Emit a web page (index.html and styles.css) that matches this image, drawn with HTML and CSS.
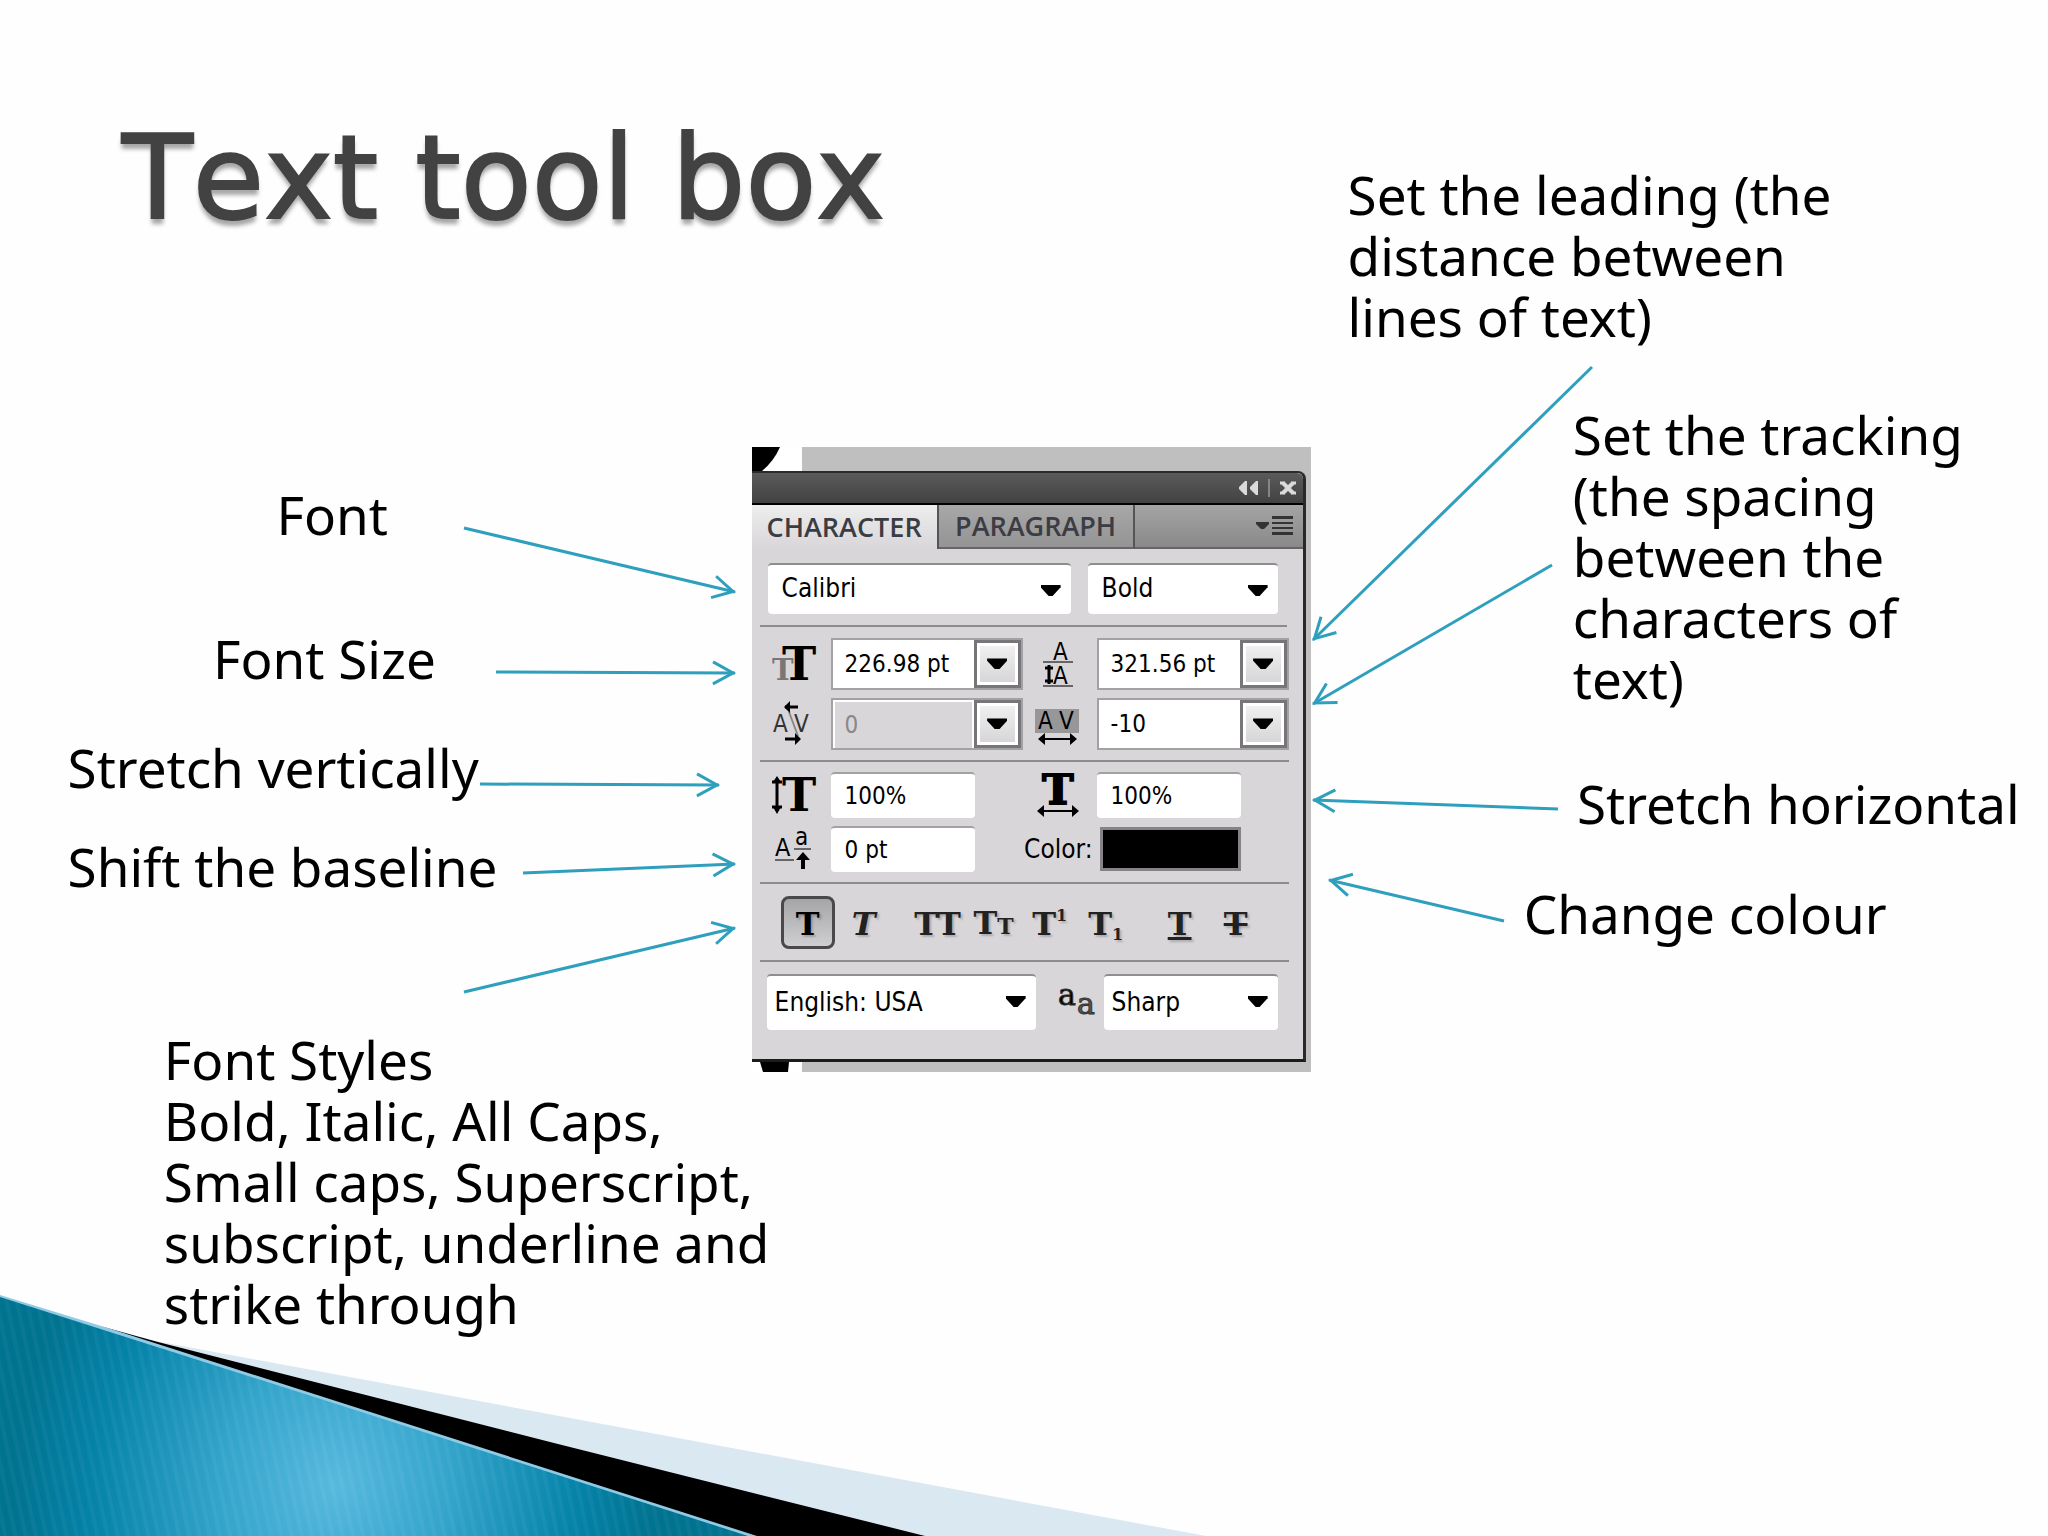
FILE: index.html
```html
<!DOCTYPE html>
<html lang="en">
<head>
    <meta charset="UTF-8">
    <meta name="viewport" content="width=device-width, initial-scale=1.0">
    <title>Text tool box</title>
    <link rel="stylesheet" href="styles.css">
</head>
<body>

<main class="slide">
    <!-- background wave -->
    <svg class="wave" viewBox="0 0 2048 256" preserveAspectRatio="none" aria-hidden="true">
        <defs>
            <radialGradient id="teal" gradientUnits="userSpaceOnUse" cx="0" cy="0" r="1" gradientTransform="translate(335 205) rotate(-78) scale(360 320)">
                <stop offset="0" stop-color="#58b9de"/>
                <stop offset="0.35" stop-color="#35a5cb"/>
                <stop offset="0.75" stop-color="#0583a9"/>
                <stop offset="1" stop-color="#007390"/>
            </radialGradient>
            <pattern id="stripes" width="10" height="10" patternUnits="userSpaceOnUse" patternTransform="rotate(-12)">
                <rect width="4" height="10" fill="#ffffff" opacity="0.04"/>
            </pattern>
        </defs>
        <polygon points="150,60 1206,256 900,256" fill="#d9e8f1"/>
        <polygon points="100,46 158,62 554,163 925,256 740,256" fill="#000000"/>
        <polygon points="0,16 111,50 751,256 0,256" fill="url(#teal)"/>
        <polygon points="0,16 111,50 751,256 0,256" fill="url(#stripes)"/>
        <polygon points="0,15 111,49 757,256 748,256 352,129 0,17" fill="#8fcbe4"/>
    </svg>

    <h1>Text tool box</h1>

    <!-- callouts -->
    <p class="callout font">Font</p>
    <p class="callout size">Font Size</p>
    <p class="callout vertical">Stretch vertically</p>
    <p class="callout baseline">Shift the baseline</p>
    <p class="callout styles">Font Styles<br>Bold, Italic, All Caps,<br>Small caps, Superscript,<br>subscript, underline and<br>strike through</p>
    <p class="callout leading">Set the leading (the<br>distance between<br>lines of text)</p>
    <p class="callout tracking">Set the tracking<br>(the spacing<br>between the<br>characters of<br>text)</p>
    <p class="callout horizontal">Stretch horizontal</p>
    <p class="callout colour">Change colour</p>

    <!-- character panel -->
    <section class="capture">
        <svg class="scrap" width="50" height="24" viewBox="0 0 50 24" aria-hidden="true">
            <rect width="50" height="24" fill="#fff"/>
            <path d="M0 0H28Q22 14 10 24H0Z"/>
        </svg>
        <div class="panel">
            <div class="titlebar">
                <button type="button" aria-label="Collapse">
                    <svg width="20" height="14" viewBox="0 0 20 14" fill="#dadada"><path d="M8 0V14H6L0 8V6L6 0ZM19 0V14H17L11 8V6L17 0Z"/></svg>
                </button>
                <span class="divider"></span>
                <button type="button" aria-label="Close">
                    <svg width="18" height="14" viewBox="0 0 18 14" fill="none" stroke="#dadada" stroke-width="4"><path d="M4 2L14 12M14 2L4 12"/><path d="M1 2H6M12 2H17M1 12H6M12 12H17" stroke-width="3"/></svg>
                </button>
            </div>
            <div class="tabs">
                <button type="button" class="tab active">CHARACTER</button>
                <button type="button" class="tab">PARAGRAPH</button>
                <button type="button" class="menu" aria-label="Panel menu">
                    <svg width="38" height="20" viewBox="0 0 38 20" fill="#333"><path d="M0 6H13V8L8 13H5L0 8ZM16 0H37V3H16ZM16 6H37V8H16ZM16 11H37V13H16ZM16 16H37V19H16Z"/></svg>
                </button>
            </div>

            <div class="row fonts">
                <div class="select family"><select aria-label="Font family"><option>Calibri</option></select></div>
                <div class="select style"><select aria-label="Font style"><option>Bold</option></select></div>
            </div>

            <div class="row fields">
                <label for="fontSize" aria-label="Font size">
                    <svg width="48" height="44" viewBox="0 0 48 44">
                        <text x="0" y="38" class="serif" font-size="29" fill="#777">T</text>
                        <text x="10" y="38" class="serif" font-size="46">T</text>
                    </svg>
                </label>
                <div class="combo"><input id="fontSize" type="text" value="226.98 pt"><button type="button" aria-label="Size list"></button></div>
                <label for="leading" aria-label="Leading">
                    <svg width="48" height="48" viewBox="0 0 48 48">
                        <text x="18" y="20" class="sans" font-size="24">A</text>
                        <text x="18" y="44" class="sans" font-size="24">A</text>
                        <path d="M8 22H38M8 46H38" stroke="#666" stroke-width="2"/>
                        <path d="M14 25V44M10 28H18M10 41H18" stroke="#000" stroke-width="3"/>
                    </svg>
                </label>
                <div class="combo"><input id="leading" type="text" value="321.56 pt"><button type="button" aria-label="Leading list"></button></div>

                <label for="kerning" aria-label="Kerning">
                    <svg width="48" height="48" viewBox="0 0 48 48">
                        <text x="1" y="32" class="sans" font-size="24" fill="#333">A</text>
                        <text x="22" y="32" class="sans" font-size="24" fill="#333">V</text>
                        <path d="M17 12L26 36" stroke="#888" stroke-width="2"/>
                        <path d="M13 7H26M13 39H26" stroke="#000" stroke-width="3"/>
                        <path d="M12 7L18 1V13ZM29 39L23 33V45Z"/>
                    </svg>
                </label>
                <div class="combo disabled"><input id="kerning" type="text" value="0" disabled><button type="button" aria-label="Kerning list"></button></div>
                <label for="tracking" aria-label="Tracking">
                    <svg width="48" height="48" viewBox="0 0 48 48">
                        <rect x="0" y="9" width="44" height="24" fill="#979797"/>
                        <text x="3" y="29" class="sans" font-size="24">A</text>
                        <text x="24" y="29" class="sans" font-size="24">V</text>
                        <path d="M6 39H39" stroke="#000" stroke-width="2"/>
                        <path d="M3 39L10 33V45ZM42 39L35 33V45Z"/>
                    </svg>
                </label>
                <div class="combo"><input id="tracking" type="text" value="-10"><button type="button" aria-label="Tracking list"></button></div>
            </div>

            <div class="row fields scale">
                <label for="vScale" aria-label="Vertical scale">
                    <svg width="48" height="44" viewBox="0 0 48 44">
                        <text x="10" y="38" class="serif" font-size="46">T</text>
                        <path d="M5 6V38M0 9H10M0 34H10" stroke="#000" stroke-width="3"/>
                        <path d="M5 3L9 9H1ZM5 41L9 34H1Z"/>
                    </svg>
                </label>
                <input id="vScale" type="text" value="100%">
                <label for="hScale" aria-label="Horizontal scale">
                    <svg width="48" height="44" viewBox="0 0 48 44">
                        <text x="23" y="31" class="serif wide" font-size="42" text-anchor="middle">T</text>
                        <path d="M4 38H41" stroke="#000" stroke-width="2"/>
                        <path d="M2 38L9 32V44ZM44 38L37 32V44Z"/>
                    </svg>
                </label>
                <input id="hScale" type="text" value="100%">

                <label for="shift" aria-label="Baseline shift">
                    <svg width="48" height="44" viewBox="0 0 48 44">
                        <text x="3" y="29" class="sans" font-size="25">A</text>
                        <text x="23" y="18" class="sans" font-size="24">a</text>
                        <path d="M3 33H22M22 22H39" stroke="#666" stroke-width="2"/>
                        <path d="M31 28V42" stroke="#000" stroke-width="4"/>
                        <path d="M31 25L38 33H24Z"/>
                    </svg>
                </label>
                <input id="shift" type="text" value="0 pt">
                <label class="text" for="color">Color:</label>
                <input id="color" type="color" value="#000000">
            </div>

            <div class="row buttons">
                <div class="group">
                    <button type="button" class="pressed" aria-label="Bold">T</button>
                    <button type="button" aria-label="Italic"><i>T</i></button>
                </div>
                <div class="group">
                    <button type="button" aria-label="All caps">TT</button>
                    <button type="button" aria-label="Small caps">T<small>T</small></button>
                    <button type="button" aria-label="Superscript">T<sup>1</sup></button>
                    <button type="button" aria-label="Subscript">T<sub>1</sub></button>
                </div>
                <div class="group">
                    <button type="button" aria-label="Underline"><u>T</u></button>
                    <button type="button" aria-label="Strikethrough"><s>T</s></button>
                </div>
            </div>

            <div class="row language">
                <div class="select lang"><select aria-label="Language"><option>English: USA</option></select></div>
                <label for="antialias" aria-label="Anti-aliasing">
                    <svg width="38" height="36" viewBox="0 0 38 36">
                        <text x="0" y="21" class="aa" font-size="30">a</text>
                        <text x="19" y="30" class="aa" font-size="30" fill="#555">a</text>
                    </svg>
                </label>
                <div class="select sharp"><select id="antialias"><option>Sharp</option></select></div>
            </div>
        </div>
        <svg class="scrap" width="50" height="10" viewBox="0 0 50 10" aria-hidden="true">
            <rect width="50" height="10" fill="#fff"/>
            <path d="M8 0H37L36 10H11Z"/>
        </svg>
    </section>

    <!-- arrows from the callouts to the panel -->
    <svg class="arrows" viewBox="0 0 2048 1536" preserveAspectRatio="none" aria-hidden="true">
        <defs>
            <marker id="head" markerUnits="userSpaceOnUse" markerWidth="28" markerHeight="28" refX="26" refY="14" orient="auto">
                <path class="tip" d="M4 3L24 14L4 25"/>
            </marker>
        </defs>
        <path class="arrow" d="M464 528L735 592"/>
        <path class="arrow" d="M496 672L735 673"/>
        <path class="arrow" d="M480 784L719 785"/>
        <path class="arrow" d="M523 873L735 864"/>
        <path class="arrow" d="M464 992L735 928"/>
        <path class="arrow" d="M1592 367L1313 640"/>
        <path class="arrow" d="M1552 565L1313 704"/>
        <path class="arrow" d="M1558 809L1313 800"/>
        <path class="arrow" d="M1504 921L1329 880"/>
    </svg>
</main>

</body>
</html>
```
FILE: styles.css
```css
* {
    box-sizing: border-box;
}
body {
    margin: 0;
    background-color: #fefefe;
    color: #000;
    font-family: "Noto Sans", "Open Sans", sans-serif;
}
.slide {
    position: relative;
    min-height: 100vh;
    overflow: hidden;
}
.wave {
    position: absolute;
    left: 0;
    bottom: 0;
    width: 100%;
    height: 256px;
}
h1 {
    margin: 0;
    padding: 92px 122px 0;
    font-family: "DejaVu Sans", sans-serif;
    font-size: 116px;
    line-height: 172px;
    font-weight: normal;
    font-kerning: none;
    color: #424242;
    -webkit-text-stroke: 2px #424242;
    text-shadow: 0 6px 4px rgba(0, 0, 0, 0.35);
}

/* callouts sit freely round the panel */
.callout {
    position: absolute;
    margin: 0;
    font-size: 53px;
    line-height: 61px;
    white-space: nowrap;
}
.font { left: 13.5%; top: 31.5%; }
.size { left: 10.4%; top: 40.9%; }
.vertical { left: 3.3%; top: 48%; }
.baseline { left: 3.3%; top: 54.4%; }
.styles { left: 8%; top: 67%; }
.leading { left: 65.8%; top: 10.7%; }
.tracking { left: 76.8%; top: 26.3%; }
.horizontal { left: 77%; top: 50.3%; }
.colour { left: 74.4%; top: 57.5%; }
.arrows {
    position: absolute;
    left: 0;
    top: 0;
    width: 100%;
    height: 100%;
    pointer-events: none;
}
.arrow, .tip {
    fill: none;
    stroke: #2e9fbd;
    stroke-width: 3;
}
.arrow {
    marker-end: url(#head);
}

/* panel */
.capture {
    position: absolute;
    left: 36.7%;
    top: 29.1%;
    width: 559px;
    background-color: #bfbfbf;
}
.scrap {
    display: block;
}
.panel {
    margin-right: 5px;
    border-top: 2px solid #2b2b2b;
    border-right: 3px solid #2b2829;
    border-bottom: 3px solid #1d1b1c;
    border-radius: 0 8px 0 0;
    background-color: #d8d6d9;
    font-family: "DejaVu Sans Condensed", "DejaVu Sans", sans-serif;
    font-size: 24px;
}
button, input, select {
    margin: 0;
    padding: 0;
    border: 0;
    border-radius: 0;
    background: none;
    color: #000;
    font: inherit;
}
.titlebar {
    display: flex;
    justify-content: flex-end;
    align-items: center;
    gap: 9px;
    height: 32px;
    padding-right: 6px;
    border-bottom: 2px solid #000;
    border-radius: 0 6px 0 0;
    background: linear-gradient(#5b5b5b, #424242);
}
.titlebar button {
    display: flex;
}
.divider {
    width: 2px;
    height: 18px;
    background-color: #858585;
}
.tabs {
    display: flex;
    height: 44px;
    background: linear-gradient(#a4a4a4, #888);
}
.tab {
    width: 196px;
    border-right: 2px solid #555;
    border-bottom: 2px solid #666;
    background: linear-gradient(#a8a8a8, #949494);
    color: #3c3c44;
    font-family: "Open Sans", "Noto Sans", sans-serif;
    font-size: 27px;
    font-weight: 600;
}
.tab.active {
    width: 187px;
    border-bottom: 0;
    background: linear-gradient(#eee, #d8d6d9);
}
.menu {
    display: flex;
    flex: 1;
    justify-content: flex-end;
    align-items: center;
    padding-right: 9px;
    border-bottom: 2px solid #666;
}
.row {
    margin: 0 16px 0 8px;
    border-bottom: 2px solid #8d8b8e;
}
.fonts {
    display: flex;
    gap: 17px;
    padding: 14px 9px 11px 8px;
}
.select {
    position: relative;
    height: 51px;
    border-top: 2px solid #8f8d90;
    border-radius: 4px;
    background-color: #fff;
    font-size: 26px;
}
.select select {
    appearance: none;
    width: 100%;
    height: 100%;
    padding: 0 0 2px 14px;
}
.select::after {
    content: "";
    position: absolute;
    right: 10px;
    top: 20px;
    width: 20px;
    height: 11px;
    background-color: #000;
    clip-path: polygon(0 0, 100% 0, 100% 20%, 60% 100%, 40% 100%, 0 20%);
    pointer-events: none;
}
.family {
    flex: 1;
}
.style {
    width: 190px;
}
.fields {
    display: grid;
    grid-template-columns: 71px minmax(0, 1fr) 74px minmax(0, 1fr);
    row-gap: 8px;
    align-items: center;
    margin-right: 14px;
    padding: 11px 0 10px;
}
.fields label {
    display: flex;
    padding-left: 12px;
}
.fields svg {
    display: block;
}
.serif {
    font-family: "DejaVu Serif", serif;
    font-weight: bold;
}
.wide {
    stroke: #000;
    stroke-width: 2;
}
.sans {
    font-family: "DejaVu Sans Condensed", "DejaVu Sans", sans-serif;
}
.aa {
    font-family: "DejaVu Serif", serif;
    stroke: #333;
    stroke-width: 1;
}
.combo {
    display: flex;
    height: 52px;
    border: 2px solid #a3a1a4;
    background-color: #fff;
}
.combo input {
    flex: 1;
    min-width: 0;
    padding-left: 12px;
}
.combo.disabled input {
    margin: 2px 2px 0;
    padding-left: 10px;
    background-color: #d8d6d9;
    color: #888;
}
.combo button {
    display: flex;
    justify-content: center;
    align-items: center;
    width: 47px;
    border: 3px solid #77757a;
    background: linear-gradient(#f2f2f2, #d4d4d6);
    box-shadow: inset 0 0 0 3px #fff;
}
.combo button::after {
    content: "";
    width: 20px;
    height: 11px;
    background-color: #000;
    clip-path: polygon(0 0, 100% 0, 100% 20%, 60% 100%, 40% 100%, 0 20%);
}
.scale {
    padding: 10px 0;
}
.scale input {
    width: 144px;
    height: 46px;
    padding-left: 14px;
    border-top: 2px solid #a3a1a4;
    border-radius: 4px;
    background-color: #fff;
}
.scale .text {
    justify-content: flex-end;
    padding: 0 4px 0 0;
    margin-left: -20px;
    font-size: 26px;
}
.scale input[type="color"] {
    appearance: none;
    width: 141px;
    height: 44px;
    margin-left: 3px;
    padding: 0;
    border: 3px solid #858387;
    border-radius: 0;
    background-color: #000;
}
input[type="color"]::-webkit-color-swatch-wrapper {
    padding: 0;
}
input[type="color"]::-webkit-color-swatch {
    border: 0;
}
.buttons {
    display: flex;
    gap: 20px;
    padding: 12px 0 11px 21px;
    margin-right: 14px;
}
.group {
    display: flex;
    gap: 2px;
}
.group button {
    width: 54px;
    height: 53px;
    padding-top: 4px;
    border-radius: 8px;
    color: #222;
    font-family: "DejaVu Serif", serif;
    font-size: 32px;
    font-weight: bold;
    line-height: 32px;
    text-shadow: 2px 2px 2px rgba(0, 0, 0, 0.2);
    white-space: nowrap;
}
.group .pressed {
    border: 3px solid #4a484b;
    background: linear-gradient(#a5a4a7, #cfced1);
    color: #000;
}
.group small {
    font-size: 22px;
}
.group sup, .group sub {
    font-size: 16px;
    line-height: 0;
}
.group sup {
    vertical-align: 14px;
}
.group sub {
    vertical-align: -5px;
}
.group u {
    text-decoration-thickness: 3px;
}
.language {
    display: flex;
    align-items: center;
    padding: 12px 9px 29px 7px;
    border-bottom: 0;
}
.language .select {
    height: 56px;
}
.language select {
    padding-left: 8px;
}
.lang {
    flex: 1;
}
.language label {
    margin: 0 8px 0 22px;
}
.language svg {
    display: block;
}
.sharp {
    width: 174px;
}
```
